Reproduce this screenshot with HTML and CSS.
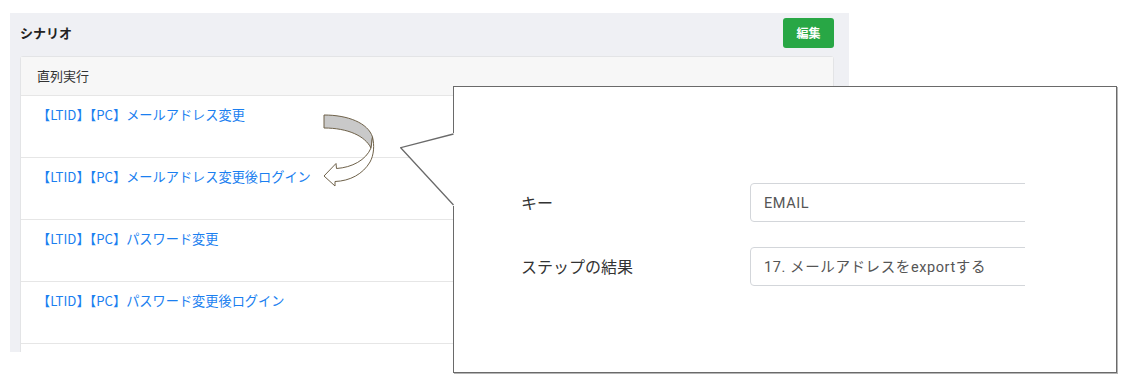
FILE: index.html
```html
<!DOCTYPE html>
<html lang="ja">
<head>
<meta charset="utf-8">
<title>シナリオ</title>
<link rel="stylesheet" href="styles.css">
</head>
<body>
<div class="stage">
  <section class="panel">
    <div class="panel-head">
      <h2 class="panel-title">シナリオ</h2>
      <button class="btn-edit" type="button">編集</button>
    </div>
    <div class="card">
      <div class="card-head">直列実行</div>
      <ul class="steps">
        <li class="step"><a class="step-link" href="#">【LTID】【PC】メールアドレス変更</a></li>
        <li class="step"><a class="step-link" href="#">【LTID】【PC】メールアドレス変更後ログイン</a></li>
        <li class="step"><a class="step-link" href="#">【LTID】【PC】パスワード変更</a></li>
        <li class="step"><a class="step-link" href="#">【LTID】【PC】パスワード変更後ログイン</a></li>
        <li class="step"></li>
      </ul>
    </div>
  </section>

  <svg class="uturn" width="80" height="90" viewBox="0 0 80 90">
    <path d="M14,10 C38,10 58,18 62.5,32 L61,43 C55,31 38,23 14,23 Z" fill="#c9c9c9" stroke="#6e6149" stroke-width="1" stroke-linejoin="round"/>
    <path d="M62.5,32 C64.5,40 64,50 60,57 C53,69 40,76 25,76.5 L25,81 L14,71 L26,58.5 L26.5,63.5 C42,62.5 56,55 61,43 Z" fill="#ffffff" stroke="#6e6149" stroke-width="1" stroke-linejoin="round"/>
  </svg>

  <div class="callout">
    <svg class="callout-tail" width="58" height="130" viewBox="0 0 58 130">
      <polygon points="53,47 0.7,61.7 53,120 57,120 57,47" fill="#ffffff"/>
      <polyline points="53.5,48 0.7,61.7 53.5,119" fill="none" stroke="#6a6a6a" stroke-width="1.3"/>
    </svg>
    <div class="form">
      <label class="form-label">キー</label>
      <div class="field"><div class="input">EMAIL</div></div>
      <label class="form-label">ステップの結果</label>
      <div class="field"><div class="input">17. メールアドレスをexportする</div></div>
    </div>
  </div>
</div>
</body>
</html>
```

FILE: styles.css
```css
* { box-sizing: border-box; }

html, body {
  margin: 0;
  padding: 0;
  background: #ffffff;
}

body {
  font-family: "Noto Sans CJK JP", "Noto Sans", sans-serif;
  color: #333333;
  width: 1124px;
  height: 384px;
  overflow: hidden;
}

.stage {
  position: relative;
  width: 1124px;
  height: 384px;
  padding: 13px 0 0 10px;
}

.panel {
  width: 839px;
  height: 339px;
  background: #eff0f4;
  overflow: hidden;
}

.panel-head {
  display: flex;
  align-items: center;
  justify-content: space-between;
  padding: 5px 15px 0 10px;
  height: 35px;
}

.panel-title {
  margin: 0;
  font-size: 13px;
  font-weight: 700;
  line-height: 20px;
  color: #222;
}

.btn-edit {
  width: 51px;
  height: 30px;
  border: none;
  border-radius: 3px;
  background: #28a745;
  color: #ffffff;
  font-family: "Noto Sans CJK JP", sans-serif;
  font-size: 12px;
  font-weight: 700;
  line-height: 30px;
  padding: 0;
}

.card {
  margin: 8px 15px 0 10px;
  background: #ffffff;
  border: 1px solid #e3e4e6;
  border-radius: 3px;
}

.card-head {
  height: 39px;
  background: #f7f7f7;
  border-bottom: 1px solid #e6e6e6;
  padding: 0 16px;
  font-size: 13px;
  line-height: 38px;
  color: #333;
}

.steps {
  list-style: none;
  margin: 0;
  padding: 0;
}

.step {
  height: 62px;
  border-bottom: 1px solid #e6e6e6;
  padding: 5px 16px 0;
}

.step-link {
  font-size: 13.2px;
  line-height: 20px;
  color: #1b7ff0;
  text-decoration: none;
}

.uturn {
  position: absolute;
  left: 310px;
  top: 105px;
}

.callout {
  position: absolute;
  left: 453px;
  top: 86px;
  width: 664px;
  height: 287px;
  background: #ffffff;
  border: 1px solid #6a6a6a;
  box-shadow: 1px 1px 0 #b5b5b5;
  padding: 96px 0 0 67px;
}

.callout-tail {
  position: absolute;
  left: -54px;
  top: -1px;
}

.form {
  display: grid;
  grid-template-columns: 229px 275px;
  row-gap: 25px;
  align-items: center;
}

.form-label {
  font-size: 16px;
  line-height: 22px;
  color: #333;
  position: relative;
  top: -1px;
}

.field {
  overflow: hidden;
  height: 39px;
}

.input {
  width: 340px;
  height: 39px;
  border: 1px solid #d3d6da;
  border-radius: 4px;
  padding: 0 13px;
  font-family: Roboto, "Noto Sans CJK JP", sans-serif;
  font-size: 14.5px;
  letter-spacing: 0.6px;
  line-height: 39px;
  color: #555;
  white-space: nowrap;
}
```
